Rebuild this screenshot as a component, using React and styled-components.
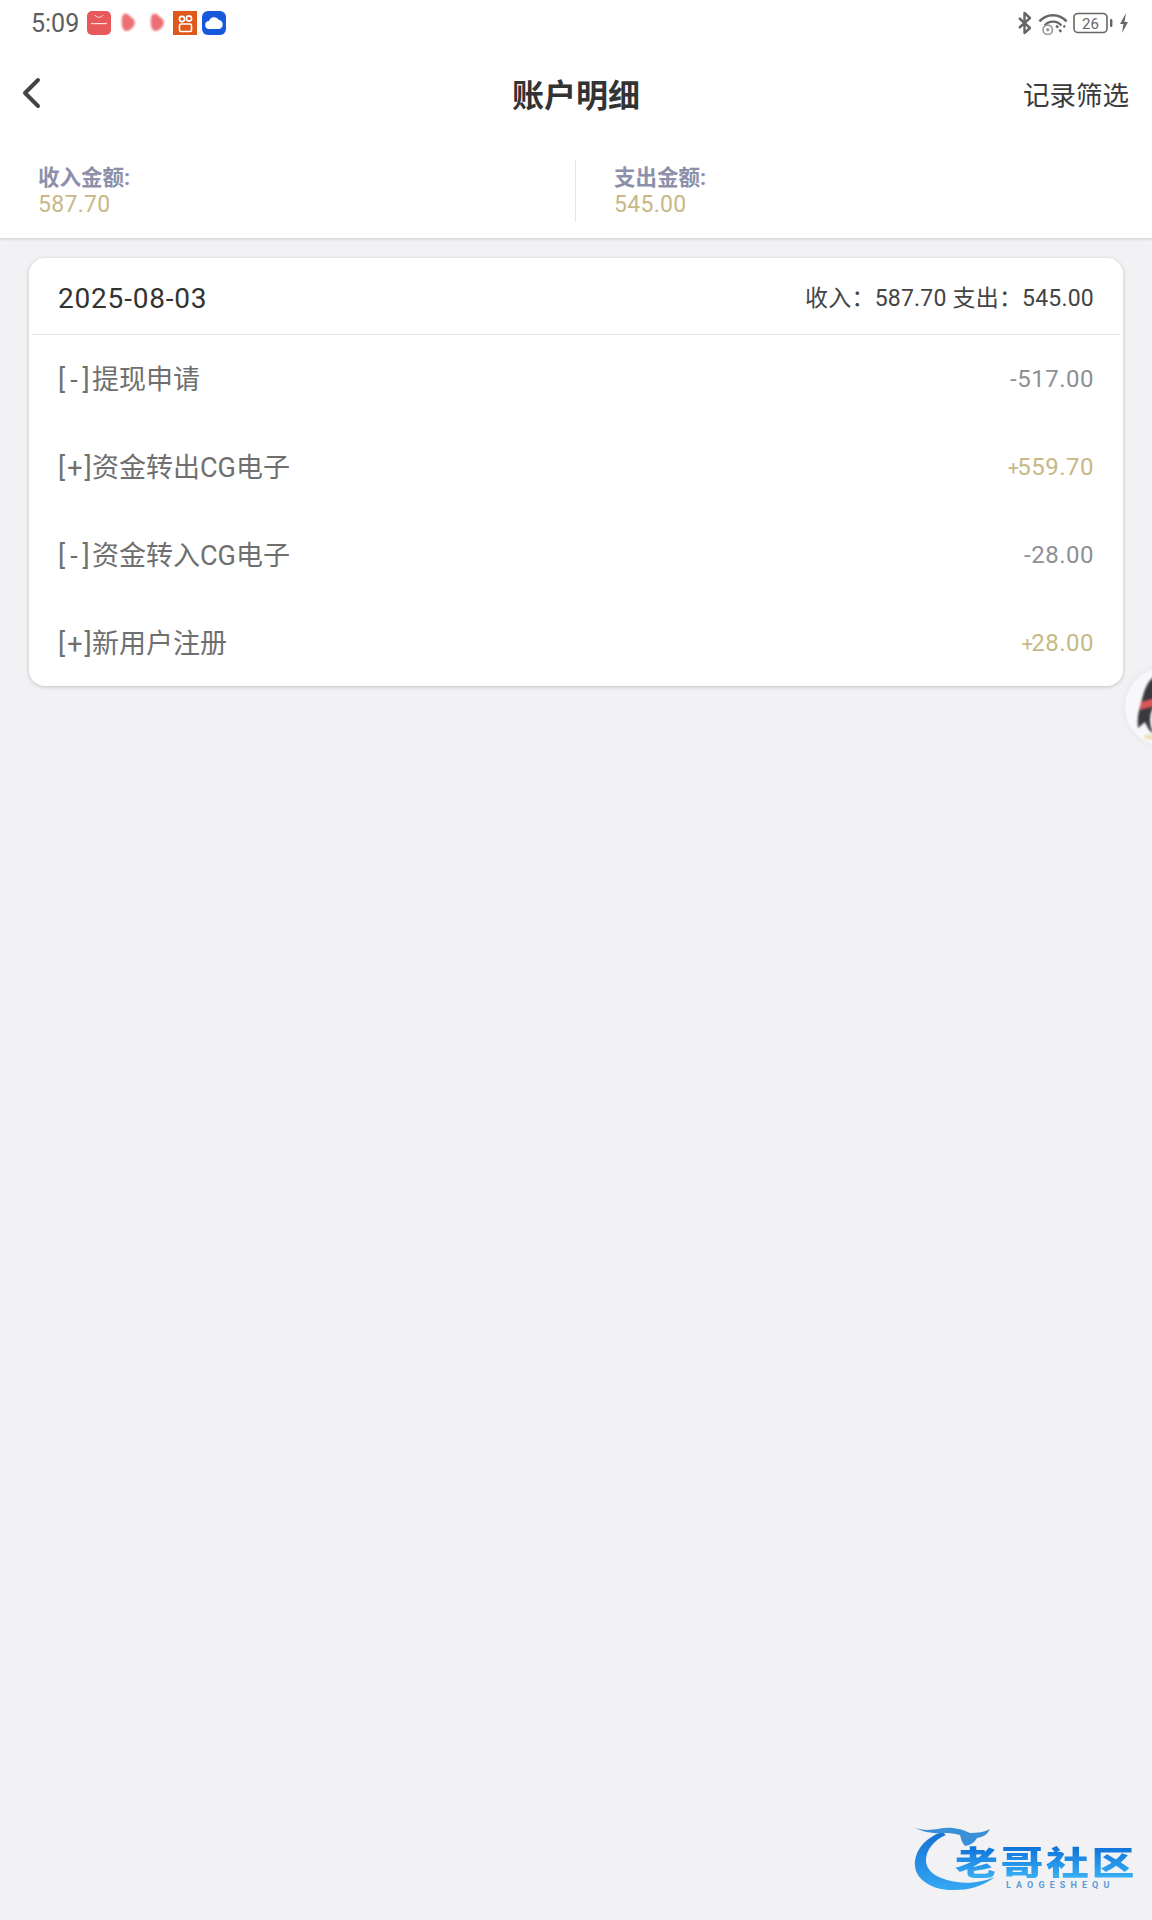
import React from 'react';
import styled, { createGlobalStyle } from 'styled-components';

const GlobalStyle = createGlobalStyle`
  html, body {
    margin: 0;
    padding: 0;
    background: #f2f2f4;
    font-family: Roboto, "Noto Sans CJK SC", sans-serif;
  }
`;

const Page = styled.div`
  position: relative;
  width: 1152px;
  height: 1920px;
  overflow: hidden;
  background: #f2f2f4;
`;

const Header = styled.header`
  background: #fff;
  box-shadow: 0 1px 3px rgba(0, 0, 0, 0.16);
`;

const StatusBar = styled.div`
  height: 48px;
  display: flex;
  align-items: center;
  justify-content: space-between;
  padding: 0 22px 2px 31px;
  box-sizing: border-box;
`;

const StatusGroup = styled.div`
  display: flex;
  align-items: center;
  gap: ${p => p.$gap || 6}px;
`;

const Clock = styled.span`
  font-size: 25px;
  color: #5c5e60;
  margin-right: 3px;
`;

const NavBar = styled.div`
  height: 90px;
  padding: 0 23px 0 20px;
  box-sizing: border-box;
  display: flex;
  align-items: center;
  justify-content: space-between;
  position: relative;
`;

const NavTitle = styled.h1`
  position: absolute;
  left: 0;
  right: 0;
  margin: 0;
  text-align: center;
  font-size: 32px;
  font-weight: 700;
  color: #333;
`;

const NavAction = styled.span`
  font-size: 26.5px;
  color: #3a3a3a;
`;

const Summary = styled.div`
  height: 100px;
  padding-top: 6px;
  box-sizing: border-box;
  display: grid;
  grid-template-columns: 575px 1fr;
  align-items: center;
`;

const SummaryCell = styled.div`
  height: 62px;
  display: flex;
  flex-direction: column;
  justify-content: center;
  padding-left: 38px;
  border-left: ${p => p.$divided ? '1px solid #e8e8ea' : 'none'};
`;

const SummaryLabel = styled.div`
  font-size: 21.5px;
  line-height: 27px;
  font-weight: 700;
  color: #8d90aa;
`;

const SummaryValue = styled.div`
  font-size: 23px;
  line-height: 27px;
  letter-spacing: 0.3px;
  color: #c8b887;
`;

const Card = styled.section`
  margin: 20px 29px 0;
  height: 428px;
  box-sizing: border-box;
  background: #fff;
  border-radius: 16px;
  box-shadow: 0 1px 4px rgba(0, 0, 0, 0.2);
`;

const CardHeader = styled.div`
  height: 76px;
  margin: 0 3px;
  padding: 0 26px;
  display: flex;
  align-items: center;
  justify-content: space-between;
  border-bottom: 1px solid #e6e6e8;
`;

const DateText = styled.span`
  font-size: 28px;
  letter-spacing: 0.8px;
  color: #333;
  padding-top: 4px;
`;

const Totals = styled.span`
  font-size: 23px;
  letter-spacing: 0.2px;
  color: #444;
  white-space: pre;
`;

const Row = styled.div`
  height: 88px;
  padding: 0 29px;
  display: flex;
  align-items: center;
  justify-content: space-between;
`;

const RowName = styled.span`
  font-size: 27px;
  color: #6f6f70;
  padding-bottom: 4px;
`;

const RowTag = styled.span`
  display: inline-block;
  width: 34px;
  letter-spacing: ${p => p.$wide ? 5 : 2}px;
`;

const RowAmount = styled.span`
  font-size: 24px;
  letter-spacing: 0.5px;
  color: ${p => p.$income ? '#c8b887' : '#8f9094'};
`;

const PlusSign = styled.span`
  font-size: 20px;
  letter-spacing: -2px;
`;

const FloatButton = styled.div`
  position: absolute;
  left: 1125px;
  top: 668px;
  width: 78px;
  height: 78px;
  border-radius: 50%;
  background: #f8f8fa;
  box-shadow: 0 0 8px rgba(0, 0, 0, 0.06);
  overflow: hidden;
`;

const Watermark = styled.div`
  position: absolute;
  left: 912px;
  top: 1822px;
  width: 230px;
  height: 72px;
`;

const WatermarkTitle = styled.div`
  position: absolute;
  left: 43px;
  top: 23px;
  font-family: "Noto Sans CJK SC", sans-serif;
  font-size: 33px;
  line-height: 33px;
  font-weight: 900;
  letter-spacing: 2px;
  white-space: nowrap;
  transform: scaleX(1.3);
  transform-origin: left center;
  background: linear-gradient(#0c6fd8, #39b0f5);
  -webkit-background-clip: text;
  background-clip: text;
  color: transparent;
`;

const WatermarkSub = styled.div`
  position: absolute;
  left: 94px;
  top: 58px;
  font-size: 9px;
  line-height: 10px;
  font-weight: 700;
  letter-spacing: 5.1px;
  color: #5b9bd8;
  white-space: nowrap;
`;

const SoftMark = styled.svg`
  filter: blur(1px);
`;

const BackIcon = () => (
  <svg width="22" height="34" viewBox="0 0 22 34">
    <path d="M18 4 5 17l13 13" fill="none" stroke="#444" strokeWidth="4" strokeLinecap="round" strokeLinejoin="round" />
  </svg>
);

const ShopIcon = () => (
  <svg width="24" height="24" viewBox="0 0 24 24">
    <rect width="24" height="24" rx="5" fill="#e8595c" />
    <path d="M8 4c1 3 7 3 8 0" fill="none" stroke="#fbdcdc" strokeWidth="1" />
    <rect x="4" y="12" width="16" height="1.2" fill="#fbdcdc" />
  </svg>
);

const BlurMark = () => (
  <SoftMark width="23.5" height="24" viewBox="0 0 22 24">
    <path d="M7 3c3-1 5 0 7 3 4 2 5 6 3 9-2 3-5 5-8 5-3-1-4-5-4-9 0-3 0-6 2-8Z" fill="#e8565c" opacity="0.85" />
  </SoftMark>
);

const VideoIcon = () => (
  <svg width="24" height="24" viewBox="0 0 24 24">
    <rect width="24" height="24" fill="#e0581c" />
    <circle cx="9" cy="8" r="2.6" fill="none" stroke="#fff" strokeWidth="1.6" />
    <circle cx="16" cy="7.5" r="2.6" fill="none" stroke="#fff" strokeWidth="1.6" />
    <rect x="6.5" y="13" width="12" height="7.5" rx="1.5" fill="none" stroke="#fff" strokeWidth="1.6" />
  </svg>
);

const CloudIcon = () => (
  <svg width="24" height="24" viewBox="0 0 24 24">
    <rect width="24" height="24" rx="6" fill="#1659dd" />
    <path d="M7.5 18a4 4 0 0 1-.5-8 5.5 5.5 0 0 1 10-1 4.6 4.6 0 0 1 0 9Z" fill="#fff" />
  </svg>
);

const BluetoothIcon = () => (
  <svg width="16" height="24" viewBox="0 0 16 24">
    <path d="M2 7 13 17 7.5 22V2L13 7 2 17" fill="none" stroke="#666" strokeWidth="2.4" strokeLinejoin="round" />
  </svg>
);

const WifiIcon = () => (
  <svg width="30" height="23" viewBox="0 0 28 22">
    <path d="M1 9c7-8 19-8 26 0" fill="none" stroke="#666" strokeWidth="2.4" />
    <path d="M6 13c4-5 12-5 16 0" fill="none" stroke="#666" strokeWidth="2.2" />
    <circle cx="9" cy="17" r="4.5" fill="none" stroke="#999" strokeWidth="1.6" />
    <circle cx="9" cy="17" r="1.6" fill="#999" />
    <path d="M17 13l2 2M20 17l2 2M24 13l1.5 1.5" stroke="#666" strokeWidth="2.2" />
  </svg>
);

const BatteryIcon = () => (
  <svg width="40" height="22" viewBox="0 0 40 22">
    <rect x="1" y="1.5" width="33" height="19" rx="4" fill="none" stroke="#666" strokeWidth="1.6" />
    <text x="17.5" y="16.5" textAnchor="middle" fontSize="15" fontFamily="Roboto, sans-serif" fill="#666">26</text>
    <rect x="37" y="7" width="2.4" height="8" rx="1" fill="#666" />
  </svg>
);

const BoltIcon = () => (
  <svg width="12" height="22" viewBox="0 0 10 22">
    <path d="M7 1 1 12h3.5L3 21l6-11H5.5Z" fill="#666" />
  </svg>
);

const PenguinIcon = () => (
  <SoftMark width="78" height="78" viewBox="0 0 78 78">
    <path d="M30 8C22 12 18 26 16 36 13 44 12 52 13 60l7-6c2 4 4 10 10 12Z" fill="#3b393e" />
    <ellipse cx="34" cy="52" rx="9" ry="16" fill="#f7f7f7" />
    <path d="M16 34 30 30V38L15 42Z" fill="#d9565a" />
    <ellipse cx="26" cy="69" rx="7" ry="2.5" fill="#efdcb4" />
  </SoftMark>
);

const DragonSwoosh = () => (
  <svg width="112" height="72" viewBox="0 0 112 72" style={{ position: 'absolute', left: 0, top: 0 }}>
    <defs>
      <linearGradient id="swoosh" x1="0" y1="0" x2="0" y2="1">
        <stop offset="0" stopColor="#1470d4" />
        <stop offset="1" stopColor="#35a8f2" />
      </linearGradient>
    </defs>
    <path d="M30 10C12 16 2 30 3 44c1 14 18 25 40 24 14 0 26-3 40-13-12 5-28 7-38 5C26 57 14 50 14 38c0-10 8-20 20-25Z" fill="url(#swoosh)" />
    <path d="M2 5c8 4 16 3 24 2 12-3 24 0 32 4 8 0 14-1 20-4-3 6-7 8-13 9-2 4-6 7-12 8-3-3-4-7-5-11-4-1-8-2-13-2C20 12 10 10 2 5Z" fill="#3a8fd9" />
  </svg>
);

const records = [
  { tag: '[-]', name: '提现申请', amount: '-517.00' },
  { tag: '[+]', name: '资金转出CG电子', amount: '559.70', income: true },
  { tag: '[-]', name: '资金转入CG电子', amount: '-28.00' },
  { tag: '[+]', name: '新用户注册', amount: '28.00', income: true },
];

const App = () => (
  <Page>
    <GlobalStyle />
    <Header>
      <StatusBar>
        <StatusGroup $gap={5}>
          <Clock>5:09</Clock>
          <ShopIcon />
          <BlurMark />
          <BlurMark />
          <VideoIcon />
          <CloudIcon />
        </StatusGroup>
        <StatusGroup $gap={5}>
          <BluetoothIcon />
          <WifiIcon />
          <BatteryIcon />
          <BoltIcon />
        </StatusGroup>
      </StatusBar>
      <NavBar>
        <BackIcon />
        <NavTitle>账户明细</NavTitle>
        <NavAction>记录筛选</NavAction>
      </NavBar>
      <Summary>
        <SummaryCell>
          <SummaryLabel>收入金额:</SummaryLabel>
          <SummaryValue>587.70</SummaryValue>
        </SummaryCell>
        <SummaryCell $divided>
          <SummaryLabel>支出金额:</SummaryLabel>
          <SummaryValue>545.00</SummaryValue>
        </SummaryCell>
      </Summary>
    </Header>
    <Card>
      <CardHeader>
        <DateText>2025-08-03</DateText>
        <Totals>收入：587.70 支出：545.00</Totals>
      </CardHeader>
      {records.map(r => (
        <Row key={r.name}>
          <RowName><RowTag $wide={!r.income}>{r.tag}</RowTag>{r.name}</RowName>
          <RowAmount $income={r.income}>{r.income && <PlusSign>+</PlusSign>}{r.amount}</RowAmount>
        </Row>
      ))}
    </Card>
    <FloatButton>
      <PenguinIcon />
    </FloatButton>
    <Watermark>
      <DragonSwoosh />
      <WatermarkTitle>老哥社区</WatermarkTitle>
      <WatermarkSub>LAOGESHEQU</WatermarkSub>
    </Watermark>
  </Page>
);

export default App;
